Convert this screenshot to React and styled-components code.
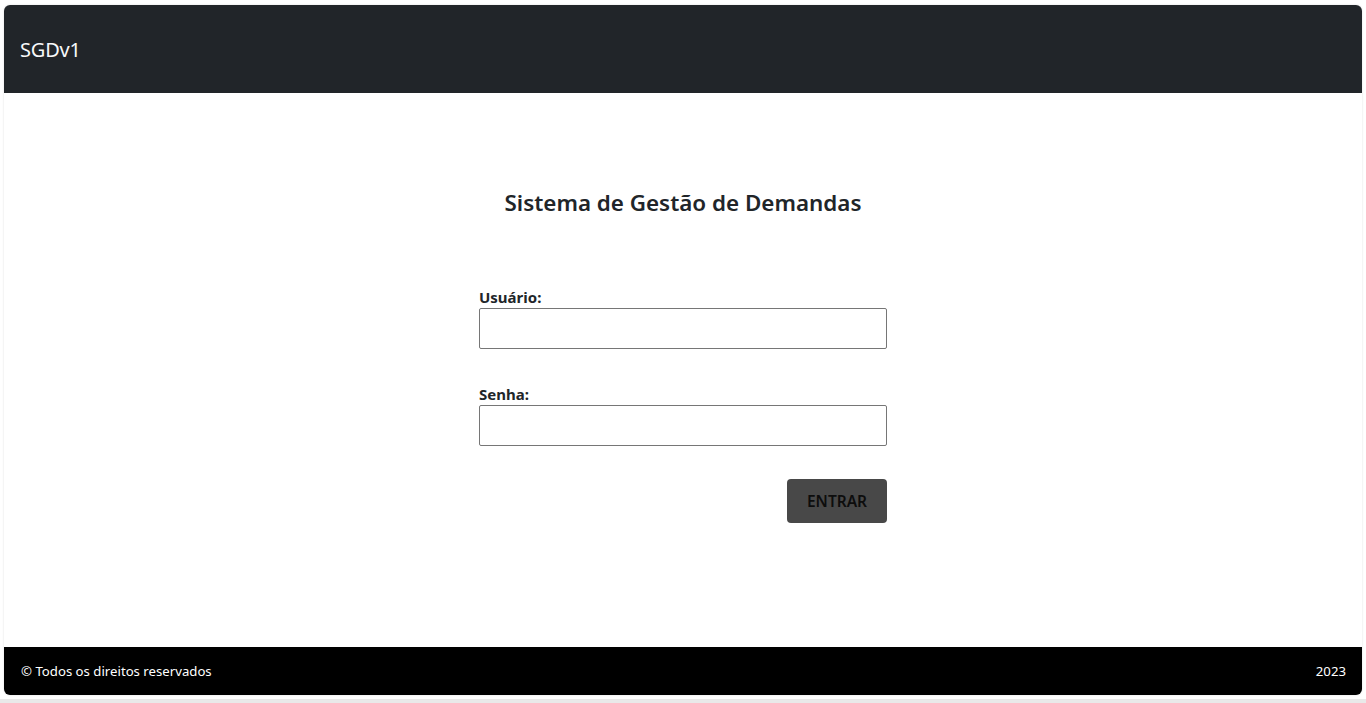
import React from "react";
import styled, { createGlobalStyle } from "styled-components";

const Global = createGlobalStyle`
  html, body { margin: 0; padding: 0; background: #ffffff; }
  body { font-family: "Noto Sans", "Open Sans", sans-serif; color: #212529; }
  * { box-sizing: border-box; }
`;

const Page = styled.div`
  height: 703px;
  padding: 5px 4px 0 4px;
  display: flex;
  flex-direction: column;
  background: linear-gradient(to bottom, #fff 0, #fff 699px, #e9e9e9 699px, #e9e9e9 100%);
`;

const Card = styled.div`
  height: 690px;
  display: flex;
  flex-direction: column;
  border-radius: 6px;
  overflow: hidden;
  background: #fff;
  box-shadow: 0 0 2px rgba(0, 0, 0, 0.15);
`;

const Header = styled.header`
  height: 88px;
  flex: none;
  background: #212529;
  display: flex;
  align-items: center;
  padding: 0 16px;
`;

const Brand = styled.span`
  color: #f8f9fa;
  font-size: 20px;
  letter-spacing: -0.2px;
  line-height: 24px;
  padding-top: 2px;
`;

const Main = styled.main`
  flex: 1;
  display: flex;
  flex-direction: column;
  align-items: center;
  padding-top: 94px;
`;

const Title = styled.h1`
  margin: 0;
  font-size: 22.4px;
  font-weight: 600;
  color: #212529;
  line-height: 32px;
`;

const Form = styled.form`
  width: 408px;
  margin-top: 69px;
  display: flex;
  flex-direction: column;
`;

const Field = styled.div`
  display: flex;
  flex-direction: column;
  margin-bottom: ${(p) => p.$mb}px;
`;

const Label = styled.label`
  font-size: 15px;
  font-weight: 700;
  color: #212529;
  line-height: 20px;
  margin-bottom: 1px;
  margin-top: -1px;
`;

const Input = styled.input`
  height: 41px;
  width: 100%;
  border: 1px solid #767676;
  border-radius: 2px;
  padding: 0 8px;
  font: inherit;
  outline: none;
`;

const Actions = styled.div`
  display: flex;
  justify-content: flex-end;
`;

const Button = styled.button`
  width: 100px;
  height: 44px;
  border: none;
  border-radius: 4px;
  background: #484848;
  color: #0d0d0d;
  font-family: inherit;
  font-size: 15.5px;
  font-weight: 600;
  cursor: pointer;
`;

const Footer = styled.footer`
  height: 48px;
  flex: none;
  background: #000;
  color: #fff;
  display: flex;
  align-items: center;
  justify-content: space-between;
  padding: 0 16px 0 17px;
  font-size: 13.2px;
`;

export default function App() {
  return (
    <>
      <Global />
      <Page>
        <Card>
          <Header>
            <Brand>SGDv1</Brand>
          </Header>
          <Main>
            <Title>Sistema de Gestão de Demandas</Title>
            <Form onSubmit={(e) => e.preventDefault()}>
              <Field $mb={36}>
                <Label htmlFor="usuario">Usuário:</Label>
                <Input id="usuario" type="text" />
              </Field>
              <Field $mb={33}>
                <Label htmlFor="senha">Senha:</Label>
                <Input id="senha" type="password" />
              </Field>
              <Actions>
                <Button type="submit">ENTRAR</Button>
              </Actions>
            </Form>
          </Main>
          <Footer>
            <span>© Todos os direitos reservados</span>
            <span>2023</span>
          </Footer>
        </Card>
      </Page>
    </>
  );
}
